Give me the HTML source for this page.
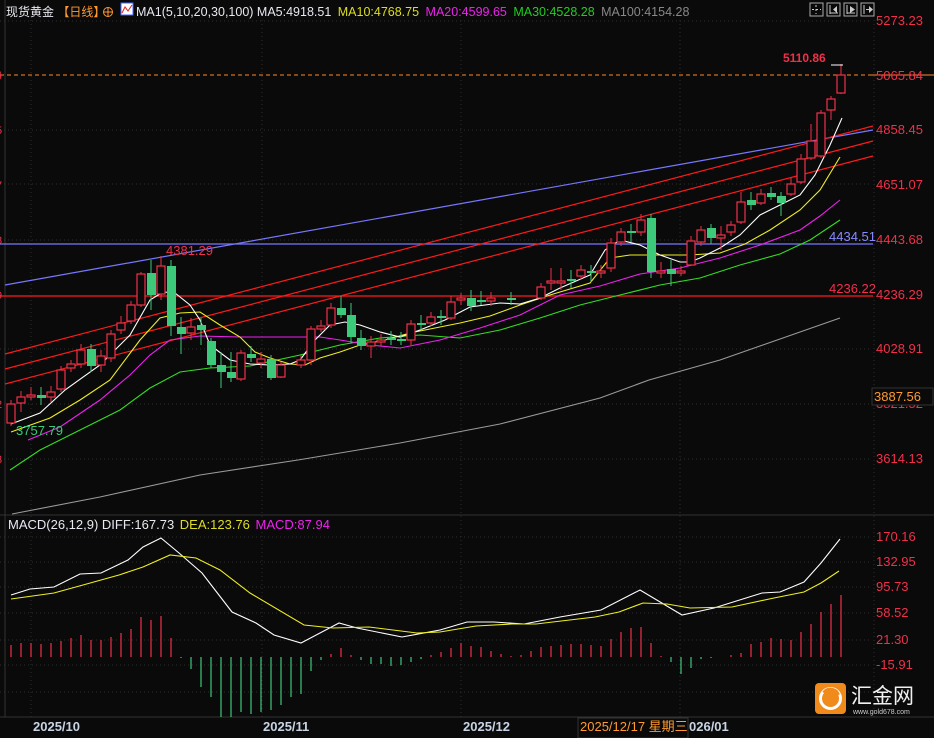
<!DOCTYPE html>
<html><head><meta charset="utf-8"><style>
html,body{margin:0;padding:0;background:#0a0a0a;width:934px;height:738px;overflow:hidden}
svg{display:block}
text{font-family:"Liberation Sans","Noto Sans CJK SC",sans-serif}
</style></head><body>
<svg width="934" height="738" viewBox="0 0 934 738" xmlns="http://www.w3.org/2000/svg">
<rect width="934" height="738" fill="#0a0a0a"/>
<g stroke="#2e2e2e" stroke-dasharray="1,3" stroke-width="1">
<line x1="0" y1="21" x2="870" y2="21"/><line x1="0" y1="130" x2="870" y2="130"/><line x1="0" y1="184" x2="870" y2="184"/>
<line x1="0" y1="240" x2="870" y2="240"/><line x1="0" y1="349" x2="870" y2="349"/><line x1="0" y1="404" x2="870" y2="404"/><line x1="0" y1="459" x2="870" y2="459"/>
<line x1="0" y1="537" x2="870" y2="537"/><line x1="0" y1="562" x2="870" y2="562"/><line x1="0" y1="587" x2="870" y2="587"/><line x1="0" y1="613" x2="870" y2="613"/><line x1="0" y1="640" x2="870" y2="640"/><line x1="0" y1="665" x2="870" y2="665"/><line x1="0" y1="692" x2="870" y2="692"/>
<line x1="31" y1="20" x2="31" y2="717"/><line x1="262" y1="20" x2="262" y2="717"/><line x1="461" y1="20" x2="461" y2="717"/><line x1="680" y1="20" x2="680" y2="717"/><line x1="874" y1="20" x2="874" y2="717"/>
</g>
<line x1="5" y1="0" x2="5" y2="717" stroke="#333"/>
<line x1="0" y1="515" x2="934" y2="515" stroke="#333"/>
<line x1="0" y1="717" x2="934" y2="717" stroke="#333"/>
<line x1="0" y1="75" x2="870" y2="75" stroke="#ff8a2a" stroke-dasharray="4,3"/>
<line x1="870" y1="75" x2="934" y2="75" stroke="#ff8a2a"/>
<line x1="0" y1="244" x2="873" y2="244" stroke="#7777ff" stroke-width="1.2"/>
<line x1="0" y1="296" x2="873" y2="296" stroke="#ff1a1a" stroke-width="1.2"/>
<line x1="5" y1="285" x2="873" y2="130" stroke="#7777ff" stroke-width="1.2"/>
<g stroke="#ff1a1a" stroke-width="1.2">
<line x1="5" y1="354" x2="873" y2="126"/><line x1="5" y1="369" x2="873" y2="141"/><line x1="5" y1="384" x2="873" y2="156"/>
</g>
<g fill="none" stroke-width="1.1">
<polyline stroke="#9a9a9a" points="12,514 100,497 200,475 298,460 400,443 500,424 600,398 649,380 720,360 840,318"/>
<polyline stroke="#33dd22" points="10,470 40,450 80,430 120,410 150,388 180,372 210,368 250,366 300,355 340,345 380,338 420,335 460,338 500,330 540,318 580,305 620,295 660,285 700,278 740,265 780,254 810,240 840,220"/>
<polyline stroke="#ee22ee" points="28,440 60,427 100,400 130,375 150,355 170,340 200,336 240,337 280,337 320,337 340,340 370,345 400,348 440,340 480,328 520,315 560,295 600,286 640,274 680,268 720,258 760,245 800,230 820,216 840,200"/>
<polyline stroke="#eeee22" points="11,432 50,418 80,400 110,380 140,340 160,318 180,313 200,312 220,325 240,337 255,352 270,358 290,364 305,365 320,358 340,352 360,345 385,340 410,333 440,327 460,323 490,316 520,305 550,295 590,283 610,258 630,255 660,255 690,255 720,253 745,244 770,230 800,210 820,190 840,157"/>
<polyline stroke="#ffffff" points="11,424 40,413 65,390 100,365 130,335 150,300 163,292 175,293 190,305 200,320 210,345 230,360 250,364 270,365 290,364 300,360 315,340 330,325 345,322 360,325 380,332 400,337 420,330 445,320 470,307 500,303 520,304 540,298 560,288 590,275 605,250 620,240 640,245 660,255 680,262 690,262 700,258 720,248 740,235 760,215 780,205 800,195 815,175 830,145 842,118"/>
</g>
<g stroke-width="1">
<g stroke="#f0304a">
<line x1="11" y1="400" x2="11" y2="426"/><line x1="21" y1="391" x2="21" y2="412"/><line x1="31" y1="387" x2="31" y2="400"/><line x1="51" y1="386" x2="51" y2="402"/><line x1="61" y1="366" x2="61" y2="392"/><line x1="71" y1="360" x2="71" y2="372"/><line x1="81" y1="344" x2="81" y2="368"/><line x1="101" y1="350" x2="101" y2="372"/><line x1="111" y1="330" x2="111" y2="362"/><line x1="121" y1="316" x2="121" y2="334"/><line x1="131" y1="301" x2="131" y2="324"/><line x1="141" y1="272" x2="141" y2="307"/><line x1="161" y1="256" x2="161" y2="300"/><line x1="191" y1="318" x2="191" y2="340"/><line x1="241" y1="350" x2="241" y2="381"/><line x1="261" y1="352" x2="261" y2="368"/><line x1="281" y1="362" x2="281" y2="378"/><line x1="301" y1="355" x2="301" y2="368"/><line x1="311" y1="326" x2="311" y2="365"/><line x1="321" y1="320" x2="321" y2="332"/><line x1="331" y1="303" x2="331" y2="328"/><line x1="371" y1="336" x2="371" y2="358"/><line x1="381" y1="334" x2="381" y2="346"/><line x1="411" y1="320" x2="411" y2="345"/><line x1="431" y1="312" x2="431" y2="326"/><line x1="451" y1="296" x2="451" y2="320"/><line x1="461" y1="293" x2="461" y2="305"/><line x1="491" y1="292" x2="491" y2="306"/><line x1="541" y1="283" x2="541" y2="300"/><line x1="551" y1="268" x2="551" y2="290"/><line x1="561" y1="268" x2="561" y2="290"/><line x1="581" y1="265" x2="581" y2="280"/><line x1="601" y1="265" x2="601" y2="278"/><line x1="611" y1="238" x2="611" y2="272"/><line x1="621" y1="228" x2="621" y2="246"/><line x1="641" y1="214" x2="641" y2="236"/><line x1="661" y1="262" x2="661" y2="278"/><line x1="681" y1="266" x2="681" y2="276"/><line x1="691" y1="236" x2="691" y2="266"/><line x1="701" y1="226" x2="701" y2="246"/><line x1="721" y1="226" x2="721" y2="250"/><line x1="731" y1="221" x2="731" y2="236"/><line x1="741" y1="192" x2="741" y2="224"/><line x1="761" y1="189" x2="761" y2="205"/><line x1="791" y1="178" x2="791" y2="196"/><line x1="801" y1="154" x2="801" y2="184"/><line x1="811" y1="124" x2="811" y2="160"/><line x1="821" y1="110" x2="821" y2="158"/><line x1="831" y1="96" x2="831" y2="120"/><line x1="841" y1="64" x2="841" y2="94"/>
</g>
<g stroke="#3cc97a">
<line x1="41" y1="387" x2="41" y2="405"/><line x1="91" y1="344" x2="91" y2="372"/><line x1="151" y1="260" x2="151" y2="310"/><line x1="171" y1="260" x2="171" y2="336"/><line x1="181" y1="317" x2="181" y2="354"/><line x1="201" y1="318" x2="201" y2="345"/><line x1="211" y1="338" x2="211" y2="368"/><line x1="221" y1="352" x2="221" y2="388"/><line x1="231" y1="352" x2="231" y2="382"/><line x1="251" y1="346" x2="251" y2="362"/><line x1="271" y1="355" x2="271" y2="380"/><line x1="341" y1="296" x2="341" y2="318"/><line x1="351" y1="303" x2="351" y2="343"/><line x1="361" y1="330" x2="361" y2="350"/><line x1="391" y1="331" x2="391" y2="345"/><line x1="401" y1="332" x2="401" y2="345"/><line x1="421" y1="315" x2="421" y2="330"/><line x1="441" y1="310" x2="441" y2="325"/><line x1="471" y1="290" x2="471" y2="311"/><line x1="481" y1="291" x2="481" y2="305"/><line x1="511" y1="292" x2="511" y2="305"/><line x1="571" y1="270" x2="571" y2="288"/><line x1="591" y1="265" x2="591" y2="282"/><line x1="631" y1="224" x2="631" y2="242"/><line x1="651" y1="214" x2="651" y2="278"/><line x1="671" y1="260" x2="671" y2="286"/><line x1="711" y1="224" x2="711" y2="244"/><line x1="751" y1="192" x2="751" y2="210"/><line x1="771" y1="187" x2="771" y2="200"/><line x1="781" y1="192" x2="781" y2="216"/>
</g>
</g>
<g fill="#0a0a0a" stroke="#f0304a" stroke-width="1.2">
<rect x="7" y="404" width="8" height="19"/><rect x="17" y="397" width="8" height="6"/><rect x="27" y="395" width="8" height="2"/><rect x="47" y="392" width="8" height="5"/><rect x="57" y="370" width="8" height="19"/><rect x="67" y="364" width="8" height="4"/><rect x="77" y="350" width="8" height="14"/><rect x="97" y="356" width="8" height="9"/><rect x="107" y="334" width="8" height="24"/><rect x="117" y="323" width="8" height="7"/><rect x="127" y="305" width="8" height="16"/><rect x="137" y="274" width="8" height="31"/><rect x="157" y="266" width="8" height="28"/><rect x="187" y="327" width="8" height="6"/><rect x="237" y="353" width="8" height="26"/><rect x="257" y="359" width="8" height="4"/><rect x="277" y="365" width="8" height="12"/><rect x="297" y="360" width="8" height="5"/><rect x="307" y="329" width="8" height="31"/><rect x="317" y="326" width="8" height="3"/><rect x="327" y="308" width="8" height="17"/><rect x="367" y="342" width="8" height="4"/><rect x="377" y="340" width="8" height="2"/><rect x="407" y="324" width="8" height="16"/><rect x="427" y="317" width="8" height="6"/><rect x="447" y="302" width="8" height="16"/><rect x="457" y="298" width="8" height="2"/><rect x="487" y="298" width="8" height="3"/><rect x="537" y="287" width="8" height="11"/><rect x="547" y="281" width="8" height="2"/><rect x="557" y="281" width="8" height="2"/><rect x="577" y="270" width="8" height="6"/><rect x="597" y="271" width="8" height="2"/><rect x="607" y="243" width="8" height="25"/><rect x="617" y="232" width="8" height="10"/><rect x="637" y="220" width="8" height="12"/><rect x="657" y="271" width="8" height="2"/><rect x="677" y="271" width="8" height="2"/><rect x="687" y="241" width="8" height="24"/><rect x="697" y="230" width="8" height="12"/><rect x="717" y="235" width="8" height="3"/><rect x="727" y="225" width="8" height="7"/><rect x="737" y="202" width="8" height="20"/><rect x="757" y="194" width="8" height="9"/><rect x="787" y="184" width="8" height="10"/><rect x="797" y="159" width="8" height="23"/><rect x="807" y="141" width="8" height="17"/><rect x="817" y="113" width="8" height="43"/><rect x="827" y="99" width="8" height="11"/><rect x="837" y="75" width="8" height="18"/>
</g>
<g fill="#3cc97a">
<rect x="37" y="395" width="9" height="3"/><rect x="87" y="349" width="9" height="17"/><rect x="147" y="273" width="9" height="22"/><rect x="167" y="266" width="9" height="60"/><rect x="177" y="327" width="9" height="7"/><rect x="197" y="325" width="9" height="5"/><rect x="207" y="341" width="9" height="24"/><rect x="217" y="365" width="9" height="7"/><rect x="227" y="372" width="9" height="6"/><rect x="247" y="354" width="9" height="4"/><rect x="267" y="359" width="9" height="19"/><rect x="337" y="308" width="9" height="7"/><rect x="347" y="315" width="9" height="22"/><rect x="357" y="338" width="9" height="8"/><rect x="387" y="338" width="9" height="2"/><rect x="397" y="339" width="9" height="2"/><rect x="417" y="323" width="9" height="2"/><rect x="437" y="316" width="9" height="2"/><rect x="467" y="298" width="9" height="8"/><rect x="477" y="300" width="9" height="2"/><rect x="507" y="298" width="9" height="2"/><rect x="567" y="279" width="9" height="2"/><rect x="587" y="271" width="9" height="2"/><rect x="627" y="231" width="9" height="2"/><rect x="647" y="218" width="9" height="54"/><rect x="667" y="269" width="9" height="5"/><rect x="707" y="228" width="9" height="10"/><rect x="747" y="200" width="9" height="5"/><rect x="767" y="193" width="9" height="4"/><rect x="777" y="196" width="9" height="7"/>
</g>
<line x1="831" y1="65" x2="843" y2="65" stroke="#fff"/>
<text x="166" y="255" fill="#f0304a" font-size="13">4381.29</text>
<text x="16" y="435" fill="#3cc97a" font-size="13">3757.79</text>
<text x="783" y="62" fill="#f0304a" font-size="12" font-weight="bold">5110.86</text>
<text x="829" y="241" fill="#8888ff" font-size="13">4434.51</text>
<text x="829" y="293" fill="#f0304a" font-size="13">4236.22</text>
<g fill="#f0304a" font-size="13">
<text x="876" y="25">5273.23</text><text x="876" y="80">5065.84</text><text x="876" y="134">4858.45</text><text x="876" y="189">4651.07</text><text x="876" y="244">4443.68</text><text x="876" y="299">4236.29</text><text x="876" y="353">4028.91</text><text x="876" y="408">3821.52</text><text x="876" y="463">3614.13</text>
<text x="876" y="541">170.16</text><text x="876" y="566">132.95</text><text x="876" y="591">95.73</text><text x="876" y="617">58.52</text><text x="876" y="644">21.30</text><text x="876" y="669">-15.91</text>
</g>
<rect x="872" y="388" width="61" height="17" fill="#0a0a0a" stroke="#333"/>
<text x="874" y="401" fill="#ff9a30" font-size="13">3887.56</text>
<g fill="#f0304a" font-size="11"><text x="-4" y="79">4</text><text x="-4" y="134">5</text><text x="-4" y="189">7</text><text x="-4" y="244">8</text><text x="-4" y="299">9</text><text x="-4" y="408">2</text><text x="-4" y="463">3</text></g>
<text x="6" y="16" font-size="12"><tspan fill="#e8e8f0">现货黄金</tspan><tspan fill="#ff9a30"> 【日线】</tspan></text>
<circle cx="108" cy="12" r="4.5" fill="none" stroke="#ff9a30"/><line x1="103.5" y1="12" x2="112.5" y2="12" stroke="#ff9a30"/><line x1="108" y1="7.5" x2="108" y2="16.5" stroke="#ff9a30"/>
<rect x="121" y="3" width="12" height="12" fill="#fff" stroke="#4466ff"/><polyline points="122,13 125,7 128,11 132,5" fill="none" stroke="#d22" />
<text x="136" y="16" font-size="12.5"><tspan fill="#e8e8f0">MA1(5,10,20,30,100) MA5:4918.51 </tspan><tspan fill="#dddd22" dx="3">MA10:4768.75 </tspan><tspan fill="#ee22ee" dx="3">MA20:4599.65 </tspan><tspan fill="#22cc22" dx="3">MA30:4528.28 </tspan><tspan fill="#888" dx="3">MA100:4154.28</tspan></text>
<g fill="none" stroke="#aaa"><rect x="810" y="3" width="13" height="13"/><rect x="827" y="3" width="13" height="13"/><rect x="844" y="3" width="13" height="13"/><rect x="861" y="3" width="13" height="13"/></g>
<g stroke="#ccc"><line x1="816" y1="5" x2="816" y2="14" stroke-dasharray="2,2"/><line x1="812" y1="9.5" x2="821" y2="9.5" stroke-dasharray="2,2"/><line x1="830" y1="5" x2="830" y2="14"/><line x1="830" y1="13" x2="838" y2="13"/><line x1="847" y1="5" x2="847" y2="14"/><line x1="847" y1="13" x2="855" y2="13"/><line x1="864" y1="5" x2="864" y2="14"/><line x1="866" y1="9.5" x2="872" y2="9.5"/></g>
<g fill="#ccc"><polygon points="837,6 833,9.5 837,13"/><polygon points="850,6 855,9.5 850,13"/><polygon points="869,6 873,9.5 869,13"/></g>
<text x="8" y="529" font-size="13"><tspan fill="#e8e8f0">MACD(26,12,9) DIFF:167.73 </tspan><tspan fill="#dddd22" dx="2">DEA:123.76 </tspan><tspan fill="#ee22ee" dx="2">MACD:87.94</tspan></text>
<g stroke-width="1.2">
<g stroke="#f0304a">
<path d="M11 657v-12M21 657v-14M31 657v-14M41 657v-13M51 657v-14M61 657v-16M71 657v-19M81 657v-22M91 657v-17M101 657v-17M111 657v-20M121 657v-24M131 657v-28M141 657v-40M151 657v-37M161 657v-41M171 657v-19M331 657v-3M341 657v-9M351 657v-2M431 657v-2M441 657v-5M451 657v-9M461 657v-14M471 657v-11M481 657v-10M491 657v-6M501 657v-3M511 657v-1M521 657v-2M531 657v-6M541 657v-10M551 657v-11M561 657v-12M571 657v-13M581 657v-13M591 657v-12M601 657v-11M611 657v-18M621 657v-25M631 657v-29M641 657v-30M651 657v-14M661 657v-1M731 657v-2M741 657v-4M751 657v-13M761 657v-15M771 657v-19M781 657v-18M791 657v-17M801 657v-25M811 657v-33M821 657v-45M831 657v-53M841 657v-62"/>
</g>
<g stroke="#3cc97a">
<path d="M181 657v1M191 657v12M201 657v30M211 657v40M221 657v60M231 657v60M241 657v55M251 657v57M261 657v55M271 657v53M281 657v48M291 657v40M301 657v37M311 657v14M321 657v3M361 657v3M371 657v7M381 657v7M391 657v9M401 657v8M411 657v5M421 657v2M671 657v5M681 657v17M691 657v11M701 657v2M711 657v1"/>
</g>
</g>
<polyline fill="none" stroke="#ffffff" stroke-width="1.1" points="11,595 30,589 54,587 80,574 101,573 128,560 143,547 161,538 179,553 202,573 232,612 256,623 274,635 301,643 339,623 357,628 402,637 440,630 467,622 494,622 524,624 560,617 601,610 640,590 682,615 714,608 762,593 780,592 804,582 821,563 840,539"/>
<polyline fill="none" stroke="#eeee22" stroke-width="1.1" points="11,599 54,593 83,585 119,575 143,567 170,555 196,558 220,570 250,593 304,625 333,628 369,627 417,633 440,632 476,626 512,624 536,624 595,617 619,612 643,603 667,604 690,608 732,607 774,598 804,592 821,583 839,571"/>
<g fill="#c8d4e4" font-size="13" font-weight="bold"><text x="33" y="731">2025/10</text><text x="263" y="731">2025/11</text><text x="463" y="731">2025/12</text><text x="689" y="731">026/01</text></g>
<rect x="578" y="718" width="110" height="20" fill="#0a0a0a" stroke="#333"/>
<text x="580" y="731" fill="#ff9a30" font-size="13">2025/12/17 星期三</text>
<rect x="815" y="683" width="31" height="31" rx="4" fill="#f08a1a"/>
<circle cx="830.5" cy="698.5" r="10" fill="none" stroke="#fff" stroke-width="3"/>
<path d="M824 693 a8 8 0 0 1 14 2" fill="none" stroke="#f08a1a" stroke-width="4"/>
<text x="851" y="703" fill="#f0f0f0" font-size="21" font-family="'Noto Sans CJK SC',sans-serif">汇金网</text>
<text x="853" y="714" fill="#cccccc" font-size="7">www.gold678.com</text>
</svg>
</body></html>
